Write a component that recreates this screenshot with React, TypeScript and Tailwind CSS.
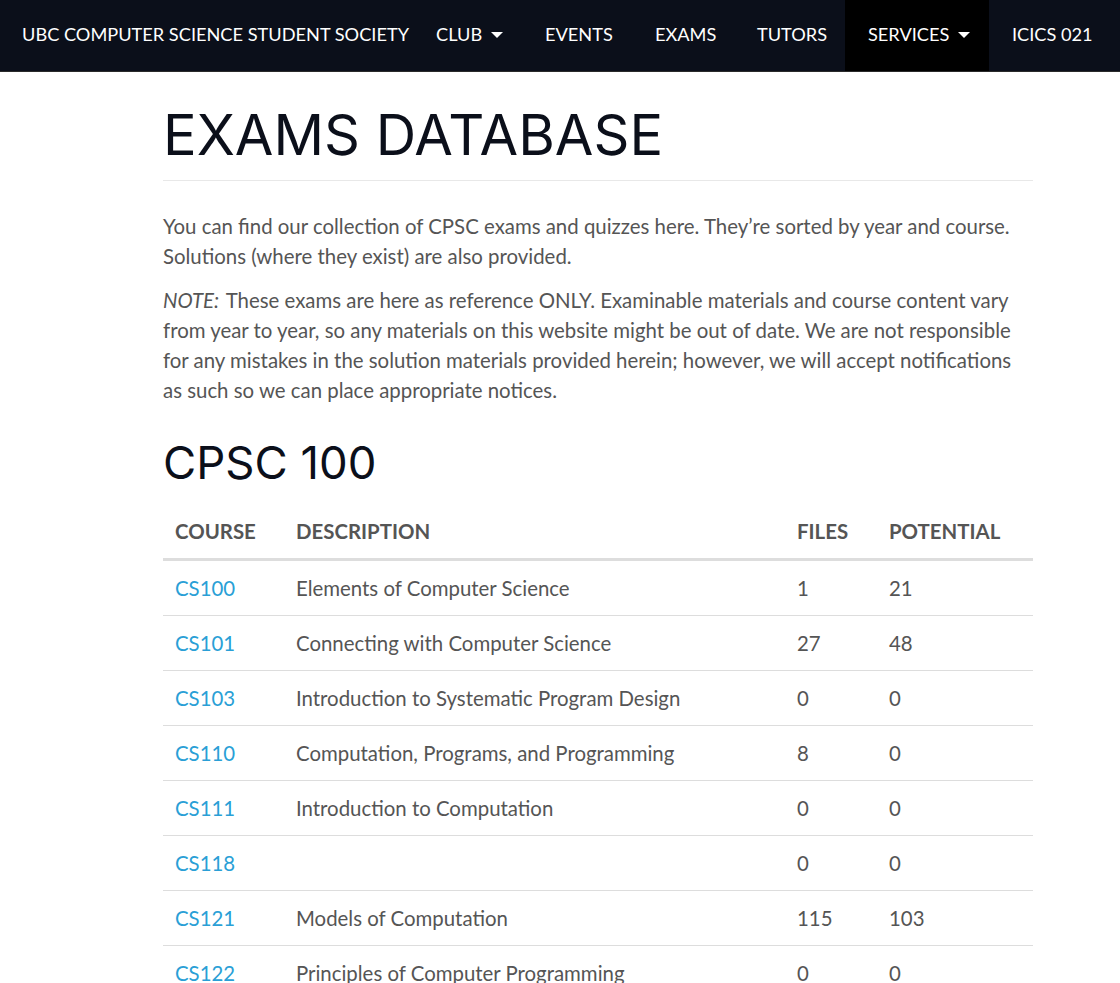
const nav = [
  { label: 'CLUB', w: 'w-[109px]', caret: true },
  { label: 'EVENTS', w: 'w-[110px]' },
  { label: 'EXAMS', w: 'w-[102px]' },
  { label: 'TUTORS', w: 'w-[111px]' },
  { label: 'SERVICES', w: 'w-[144px]', caret: true, active: true },
  { label: 'ICICS 021', w: 'w-[124px]' },
];

const courses = [
  { code: 'CS100', desc: 'Elements of Computer Science', files: 1, potential: 21 },
  { code: 'CS101', desc: 'Connecting with Computer Science', files: 27, potential: 48 },
  { code: 'CS103', desc: 'Introduction to Systematic Program Design', files: 0, potential: 0 },
  { code: 'CS110', desc: 'Computation, Programs, and Programming', files: 8, potential: 0 },
  { code: 'CS111', desc: 'Introduction to Computation', files: 0, potential: 0 },
  { code: 'CS118', desc: '', files: 0, potential: 0 },
  { code: 'CS121', desc: 'Models of Computation', files: 115, potential: 103 },
  { code: 'CS122', desc: 'Principles of Computer Programming', files: 0, potential: 0 },
];

function Caret() {
  return <span className="ml-[9px] inline-block h-0 w-0 border-x-[6px] border-t-[6px] border-x-transparent border-t-white align-middle" />;
}

export default function App() {
  const body = { fontFamily: 'Lato, "Open Sans", sans-serif' };
  const head = { fontFamily: 'Inter, "Noto Sans", sans-serif' };
  return (
    <div className="min-h-screen bg-white" style={body}>
      <nav className="flex h-[72px] items-stretch border-b border-[#2a2a2a] bg-[#0b0f1a] text-[18.2px] text-white">
        <div className="flex w-[413px] items-center whitespace-nowrap pb-[2px] pl-[22px]">UBC COMPUTER SCIENCE STUDENT SOCIETY</div>
        {nav.map((item) => (
          <div key={item.label} className={`flex items-center whitespace-nowrap pb-[2px] pl-[23px] ${item.w} ${item.active ? 'bg-black' : ''}`}>
            {item.label}
            {item.caret && <Caret />}
          </div>
        ))}
      </nav>

      <main className="ml-[163px] w-[870px]">
        <h1 className="pt-[31px] pb-[13px] text-[56px] leading-[64px] font-normal text-[#0b0f1a]" style={head}>EXAMS DATABASE</h1>
        <hr className="border-t border-[#e8e8e8]" />
        <p className="mt-[30px] text-[20.4px] leading-[30px] text-[#555]">
          You can find our collection of CPSC exams and quizzes here. They’re sorted by year and course. Solutions (where they exist) are also provided.
        </p>
        <p className="mt-[14px] text-[20.4px] leading-[30px] text-[#555]">
          <em className="pr-[2px]">NOTE:</em> These exams are here as reference ONLY. Examinable materials and course content vary from year to year, so any materials on this website might be out of date. We are not responsible for any mistakes in the solution materials provided herein; however, we will accept notifications as such so we can place appropriate notices.
        </p>

        <h2 className="mt-[30px] text-[45.5px] leading-[56px] font-normal text-[#0b0f1a]" style={head}>CPSC 100</h2>

        <table className="mt-[13px] w-full text-left text-[20.4px] leading-[30px] text-[#555]">
          <thead>
            <tr className="border-b-[3px] border-[#ddd]">
              <th className="w-[121px] px-3 py-3 font-bold">COURSE</th>
              <th className="w-[501px] px-3 py-3 font-bold">DESCRIPTION</th>
              <th className="w-[92px] px-3 py-3 font-bold">FILES</th>
              <th className="px-3 py-3 font-bold">POTENTIAL</th>
            </tr>
          </thead>
          <tbody>
            {courses.map((c) => (
              <tr key={c.code} className="border-b border-[#ddd]">
                <td className="px-3 py-3"><a href="#" className="text-[#2a9fd6]">{c.code}</a></td>
                <td className="px-3 py-3">{c.desc}</td>
                <td className="px-3 py-3">{c.files}</td>
                <td className="px-3 py-3">{c.potential}</td>
              </tr>
            ))}
          </tbody>
        </table>
      </main>
    </div>
  );
}
